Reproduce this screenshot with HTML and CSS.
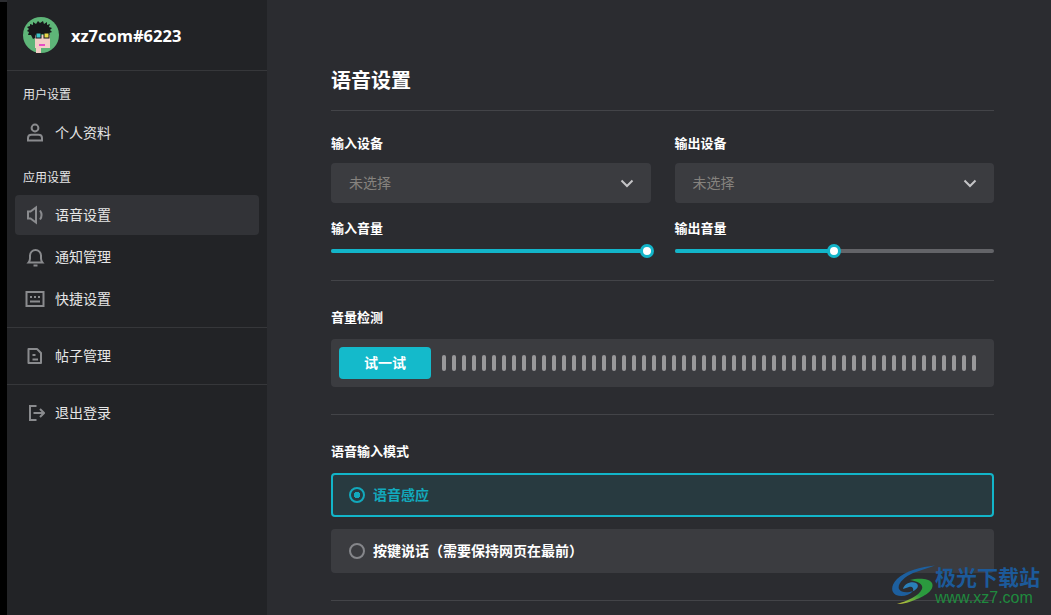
FILE: index.html
```html
<!doctype html>
<html lang="zh">
<head>
    <meta charset="utf-8">
    <meta name="viewport" content="width=device-width, initial-scale=1.0">
    <title>语音设置</title>
    <link rel="stylesheet" href="styles.css">
</head>
<body>
    <div class="edge"></div>
    <aside class="sidebar">
        <div class="profile">
            <svg class="avatar" viewBox="0 0 36 36">
                <circle cx="18" cy="18" r="18" fill="#5eb578"/>
                <path d="M12 18h15v13h-9v5h-5v-5h-1z" fill="#f3cdc6"/>
                <path d="M7 7l3 1 0-3 3 2 2-3 2 2 3-2 1 3 3-2 0 3 3-1-1 3 3 1-2 2 2 2-3 1-1 3-1-2H13l-1 2 0 2-2 1-1-2-1-2-3 0 1-3-2-1 2-2-2-2 3-1z" fill="#17171a"/>
                <rect x="13" y="16" width="5" height="5" fill="#3cc4c9" stroke="#17171a"/>
                <rect x="21" y="16" width="5" height="5" fill="#e8d94a" stroke="#17171a"/>
                <rect x="16" y="27" width="6" height="2" fill="#e64cc4"/>
            </svg>
            <span class="username">xz7com#6223</span>
        </div>
        <div class="nav-label first">用户设置</div>
        <div class="nav-item">
            <svg class="nav-icon" viewBox="0 0 20 20"><circle cx="10" cy="5" r="3.400"/><path d="M3 17.500v-2.500c0-2 1.500-3.300 3.500-3.300h7c2 0 3.500 1.300 3.500 3.300v2.500z"/></svg>
            <span>个人资料</span>
        </div>
        <div class="nav-label">应用设置</div>
        <div class="nav-item active">
            <svg class="nav-icon" viewBox="0 0 20 20"><path d="M3 6.500h2.500L11 2.500v15l-5.500-4H3z"/><path d="M15 5.500c1.800 2.600 1.800 6.400 0 9"/></svg>
            <span>语音设置</span>
        </div>
        <div class="nav-item">
            <svg class="nav-icon" viewBox="0 0 20 20"><path d="M3.500 15.500c.8-1 1.500-2 1.500-4V8.500a5.500 5.500 0 0 1 11 0v3c0 2 .7 3 1.500 4z"/><path d="M8.500 18.500h4"/></svg>
            <span>通知管理</span>
        </div>
        <div class="nav-item">
            <svg class="nav-icon" viewBox="0 0 20 16"><rect x="1.500" y="1" width="17" height="14"/><path d="M5 6h2M9 6h2M13 6h2M5 10.500h10"/></svg>
            <span>快捷设置</span>
        </div>
        <div class="nav-group">
            <div class="nav-item">
                <svg class="nav-icon" viewBox="0 0 20 20"><path d="M3.500 3h8.500l4 4v10H3.500z" stroke-linejoin="round"/><path d="M7.500 9h3M7.500 13.500h5.500"/></svg>
                <span>帖子管理</span>
            </div>
        </div>
        <div class="nav-group">
            <div class="nav-item">
                <svg class="nav-icon" viewBox="0 0 20 20"><path d="M11.500 3H5v14h6.500"/><path d="M8.500 10h10.500M15 6l4 4-4 4"/></svg>
                <span>退出登录</span>
            </div>
        </div>
    </aside>
    <main class="main">
        <h1 class="page-title">语音设置</h1>
        <section class="section device-grid">
            <div class="field">
                <div class="field-label">输入设备</div>
                <div class="select">
                    <span>未选择</span>
                    <svg class="chevron" viewBox="0 0 14 9"><path d="M1.500 1.500L7 7l5.500-5.500"/></svg>
                </div>
                <div class="field-label volume-label">输入音量</div>
                <div class="slider">
                    <div class="slider-track"><div class="slider-fill" style="width: 98.75%"><i class="slider-thumb"></i></div></div>
                </div>
            </div>
            <div class="field">
                <div class="field-label">输出设备</div>
                <div class="select">
                    <span>未选择</span>
                    <svg class="chevron" viewBox="0 0 14 9"><path d="M1.500 1.500L7 7l5.500-5.500"/></svg>
                </div>
                <div class="field-label volume-label">输出音量</div>
                <div class="slider">
                    <div class="slider-track"><div class="slider-fill" style="width: 50%"><i class="slider-thumb"></i></div></div>
                </div>
            </div>
        </section>
        <section class="section">
            <div class="field-label">音量检测</div>
            <div class="meter">
                <button class="try-btn">试一试</button>
                <div class="meter-bars">
                    <i></i><i></i><i></i><i></i><i></i><i></i><i></i><i></i><i></i>
                    <i></i><i></i><i></i><i></i><i></i><i></i><i></i><i></i><i></i>
                    <i></i><i></i><i></i><i></i><i></i><i></i><i></i><i></i><i></i>
                    <i></i><i></i><i></i><i></i><i></i><i></i><i></i><i></i><i></i>
                    <i></i><i></i><i></i><i></i><i></i><i></i><i></i><i></i><i></i>
                    <i></i><i></i><i></i><i></i><i></i><i></i><i></i><i></i><i></i>
                </div>
            </div>
        </section>
        <section class="section">
            <div class="field-label">语音输入模式</div>
            <div class="mode selected">
                <i class="radio"></i>
                <span>语音感应</span>
            </div>
            <div class="mode">
                <i class="radio"></i>
                <span>按键说话（需要保持网页在最前）</span>
            </div>
        </section>
    </main>
    <div class="watermark">
        <svg class="watermark-logo" viewBox="0 0 44 40">
            <defs>
                <linearGradient id="wm-green" x1="1" y1="0" x2="0" y2="1">
                    <stop offset="0.5" stop-color="#2b9a3e"/>
                    <stop offset="1" stop-color="#d0c93c"/>
                </linearGradient>
            </defs>
            <path d="M44 .5C30 2 14 6 6 14 0 20-.5 27 5 30c5 2 13 1 17-4-5 2-12 2-14-2-2-5 5-12 14-16 8-3 16-5 22-7.500z" fill="#1d5f9e"/>
            <path d="M12 24c1-5 8-8 13-6 4 2 1 7-3 8 1-3-1-5-4-4-2 .5-4 1.500-6 2z" fill="#2a7fb8"/>
            <path d="M19 15c8-2 19-2 22 3 3 7-7 13-15 16-6 3-14 5-20 5 10-3 22-8 25-15 2-5-5-8-12-9z" fill="url(#wm-green)"/>
        </svg>
        <div class="watermark-text">
            <div class="watermark-name">极光下载站</div>
            <div class="watermark-url">www.xz7.com</div>
        </div>
    </div>
</body>
</html>
```

FILE: styles.css
```css
* {
    box-sizing: border-box;
}
body {
    margin: 0;
    height: 615px;
    overflow: hidden;
    display: flex;
    background-color: #2b2c30;
    font-family: "Noto Sans CJK SC", "Noto Sans", sans-serif;
    color: #fff;
}
.edge {
    width: 7px;
    margin-top: 2px;
    background-color: #000;
}
.sidebar {
    width: 260px;
    flex-shrink: 0;
    background-color: #222326;
}
.profile {
    height: 71px;
    padding: 0 16px;
    display: flex;
    align-items: center;
    gap: 12px;
    border-bottom: 1px solid #36373a;
}
.avatar {
    width: 36px;
    height: 36px;
    flex-shrink: 0;
}
.username {
    margin-top: 1px;
    font-family: "Open Sans", "Noto Sans", sans-serif;
    font-size: 16.5px;
    font-weight: 700;
}
.nav-label {
    padding-left: 16px;
    margin: 14px 0 8px;
    height: 20px;
    line-height: 20px;
    font-size: 12px;
    color: #e6e6e6;
}
.nav-label.first {
    margin: 13px 0 9px;
}
.nav-item {
    height: 40px;
    margin: 2px 8px 0;
    padding-left: 12px;
    display: flex;
    align-items: center;
    gap: 8px;
    border-radius: 4px;
    font-size: 14px;
    color: #e6e6e6;
}
.nav-item span {
    margin-top: -2px;
}
.nav-label + .nav-item {
    margin-top: 0;
}
.nav-item.active {
    background-color: #323337;
}
.nav-icon {
    width: 20px;
    height: 20px;
    flex-shrink: 0;
    margin-left: -2px;
    margin-right: 2px;
    fill: none;
    stroke: #8a8b8e;
    stroke-width: 2;
}
.nav-group {
    margin-top: 8px;
    padding-top: 8px;
    border-top: 1px solid #36373a;
}
.nav-group .nav-item {
    margin-top: 0;
}
.main {
    flex: 1;
    padding: 66px 57px 0 64px;
}
.page-title {
    margin: 0;
    height: 45px;
    line-height: 28px;
    font-size: 20px;
    font-weight: 700;
    border-bottom: 1px solid #434448;
}
.section {
    padding: 27px 0;
    border-bottom: 1px solid #434448;
}
.device-grid {
    padding: 23px 0 21px;
    display: grid;
    grid-template-columns: 1fr 1fr;
    column-gap: 24px;
}
.field-label {
    height: 20px;
    line-height: 18px;
    margin-bottom: 11px;
    font-size: 13px;
    font-weight: 700;
}
.device-grid .field-label {
    margin-bottom: 9px;
}
.device-grid .volume-label {
    margin: 16px 0 4px;
}
.select {
    height: 40px;
    padding: 0 17px 0 18px;
    display: flex;
    align-items: center;
    justify-content: space-between;
    background-color: #3b3c40;
    border-radius: 4px;
    font-size: 14px;
    color: #85827e;
}
.select span {
    margin-top: -2px;
}
.chevron {
    width: 14px;
    height: 9px;
    fill: none;
    stroke: #c4c4c6;
    stroke-width: 2;
}
.slider {
    height: 16px;
    display: flex;
    align-items: center;
}
.slider-track {
    width: 100%;
    height: 4px;
    background-color: #636468;
    border-radius: 2px;
}
.slider-fill {
    position: relative;
    height: 100%;
    background-color: #12b5c9;
    border-radius: 2px;
}
.slider-thumb {
    position: absolute;
    right: -7px;
    top: -5px;
    width: 14px;
    height: 14px;
    background-color: #fff;
    border: 3px solid #12b5c9;
    border-radius: 50%;
}
.meter {
    height: 48px;
    padding: 0 18px 0 8px;
    display: flex;
    align-items: center;
    gap: 11px;
    background-color: #3b3c40;
    border-radius: 4px;
}
.try-btn {
    width: 92px;
    height: 32px;
    padding: 0 0 2px;
    border: 0;
    border-radius: 4px;
    background-color: #14bacb;
    color: #fff;
    font-family: inherit;
    font-size: 14px;
    font-weight: 700;
}
.meter-bars {
    display: flex;
    gap: 6px;
}
.meter-bars i {
    width: 4px;
    height: 16px;
    background-color: #98989a;
    border-radius: 2px;
}
.mode {
    height: 44px;
    padding-left: 18px;
    display: flex;
    align-items: center;
    gap: 8px;
    background-color: #3b3c40;
    border-radius: 4px;
    font-size: 14px;
    font-weight: 700;
}
.mode span {
    margin-top: -2px;
}
.mode + .mode {
    margin-top: 12px;
}
.mode.selected {
    padding-left: 16px;
    background-color: #283a40;
    border: 2px solid #12b5c9;
    color: #12a9bc;
}
.radio {
    width: 16px;
    height: 16px;
    border: 2px solid #85868a;
    border-radius: 50%;
}
.mode.selected .radio {
    border-color: #12a9bc;
    background: radial-gradient(circle, #12a9bc 0 3px, transparent 3.5px);
}
.watermark {
    position: absolute;
    left: 891px;
    top: 565px;
    display: flex;
}
.watermark-logo {
    width: 44px;
    height: 40px;
}
.watermark-name {
    height: 25px;
    line-height: 25px;
    font-family: "Liberation Sans", "Noto Sans CJK SC", sans-serif;
    font-size: 21px;
    font-weight: 700;
    color: #1c5a9a;
}
.watermark-url {
    height: 15px;
    line-height: 15px;
    font-family: "Liberation Sans", sans-serif;
    font-size: 16px;
    color: #1f8a3e;
}
```
